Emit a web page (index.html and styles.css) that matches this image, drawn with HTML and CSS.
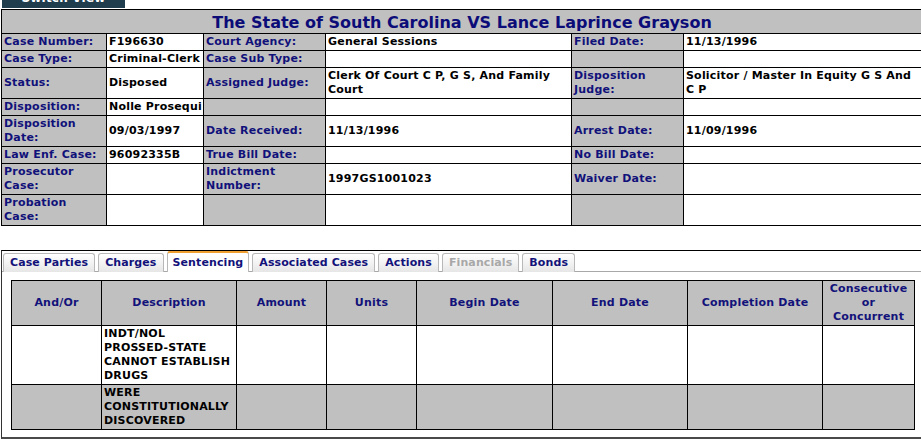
FILE: index.html
```html
<!DOCTYPE html>
<html>
<head>
<meta charset="utf-8">
<link rel="stylesheet" href="styles.css">
</head>
<body>
<div class="top"><span class="switch-btn">Switch View</span></div>
<table class="case">
  <colgroup>
    <col class="c1"><col class="c2"><col class="c3"><col class="c4"><col class="c5"><col class="c6">
  </colgroup>
  <tr><th colspan="6" class="title">The State of South Carolina VS Lance Laprince Grayson</th></tr>
  <tr class="r1">
    <td class="lbl">Case Number:</td><td class="val">F196630</td>
    <td class="lbl">Court Agency:</td><td class="val">General Sessions</td>
    <td class="lbl">Filed Date:</td><td class="val">11/13/1996</td>
  </tr>
  <tr class="r1">
    <td class="lbl">Case Type:</td><td class="val clip">Criminal-Clerk</td>
    <td class="lbl">Case Sub Type:</td><td class="val"></td>
    <td class="lbl"></td><td class="val"></td>
  </tr>
  <tr class="r2">
    <td class="lbl">Status:</td><td class="val">Disposed</td>
    <td class="lbl">Assigned Judge:</td><td class="val">Clerk Of Court C P, G S, And Family Court</td>
    <td class="lbl">Disposition Judge:</td><td class="val">Solicitor / Master In Equity G S And C P</td>
  </tr>
  <tr class="r1">
    <td class="lbl">Disposition:</td><td class="val clip">Nolle Prosequi</td>
    <td class="lbl"></td><td class="val"></td>
    <td class="lbl"></td><td class="val"></td>
  </tr>
  <tr class="r2">
    <td class="lbl">Disposition Date:</td><td class="val">09/03/1997</td>
    <td class="lbl">Date Received:</td><td class="val">11/13/1996</td>
    <td class="lbl">Arrest Date:</td><td class="val">11/09/1996</td>
  </tr>
  <tr class="r1">
    <td class="lbl">Law Enf. Case:</td><td class="val">96092335B</td>
    <td class="lbl">True Bill Date:</td><td class="val"></td>
    <td class="lbl">No Bill Date:</td><td class="val"></td>
  </tr>
  <tr class="r2">
    <td class="lbl">Prosecutor Case:</td><td class="val"></td>
    <td class="lbl">Indictment Number:</td><td class="val">1997GS1001023</td>
    <td class="lbl">Waiver Date:</td><td class="val"></td>
  </tr>
  <tr class="r2">
    <td class="lbl top-al">Probation Case:</td><td class="val"></td>
    <td class="lbl"></td><td class="val"></td>
    <td class="lbl"></td><td class="val"></td>
  </tr>
</table>

<div class="tabbox">
  <div class="tabstrip">
    <span class="tab">Case Parties</span>
    <span class="tab">Charges</span>
    <span class="tab active">Sentencing</span>
    <span class="tab">Associated Cases</span>
    <span class="tab">Actions</span>
    <span class="tab disabled">Financials</span>
    <span class="tab">Bonds</span>
  </div>
  <div class="panel">
    <table class="sent">
      <colgroup>
        <col class="s1"><col class="s2"><col class="s3"><col class="s4"><col class="s5"><col class="s6"><col class="s7"><col class="s8">
      </colgroup>
      <tr class="hdr">
        <th>And/Or</th><th>Description</th><th>Amount</th><th>Units</th><th>Begin Date</th><th>End Date</th><th>Completion Date</th><th>Consecutive <span class="word">or</span> Concurrent</th>
      </tr>
      <tr>
        <td></td><td>INDT/NOL <span class="nw">PROSSED-STATE</span> CANNOT ESTABLISH DRUGS</td><td></td><td></td><td></td><td></td><td></td><td></td>
      </tr>
      <tr class="alt">
        <td></td><td>WERE CONSTITUTIONALLY DISCOVERED</td><td></td><td></td><td></td><td></td><td></td><td></td>
      </tr>
    </table>
  </div>
</div>
</body>
</html>
```
FILE: styles.css
```css
html, body {
  margin: 0;
  padding: 0;
  background: #fff;
}
body {
  font-family: "DejaVu Sans", Verdana, sans-serif;
  font-size: 11px;
  font-weight: bold;
  letter-spacing: 0.2px;
  color: #000;
  overflow: hidden;
  padding-left: 1px;
}
.top {
  height: 9px;
  overflow: hidden;
  padding-left: 1px;
}
.switch-btn {
  display: block;
  width: 123px;
  height: 20px;
  margin-top: -12px;
  background: #1f3d4d;
  color: #fff;
  text-align: center;
  line-height: 20px;
  font-size: 12px;
}

/* case info table */
.case {
  border-collapse: collapse;
  table-layout: fixed;
  width: 921px;
}
.c1 { width: 105px; }
.c2 { width: 97px; }
.c3 { width: 122px; }
.c4 { width: 246px; }
.c5 { width: 112px; }
.c6 { width: 239px; }
.case td, .case th {
  border: 1px solid #000;
  padding: 1px 2px;
  line-height: 14px;
  vertical-align: middle;
  text-align: left;
}
.case .title {
  background: #c0c0c0;
  color: #0c0c78;
  font-size: 16px;
  letter-spacing: 0;
  line-height: 21px;
  text-align: center;
  padding: 2px 2px 0;
}
.lbl {
  background: #c0c0c0;
  color: #11117a;
}
.val {
  background: #fff;
  color: #000;
}
.clip {
  white-space: nowrap;
  overflow: hidden;
}
.case .top-al {
  vertical-align: top;
}
.r1 td { height: 14px; }
.r2 td { height: 28px; }

/* tab box */
.tabbox {
  margin-top: 24px;
  width: 940px;
  border-top: 1px solid #000;
  border-left: 1px solid #333;
  border-bottom: 2px solid #4a4a4a;
  box-shadow: 0 1px 0 #999;
}
.tabstrip {
  display: flex;
  align-items: flex-end;
  gap: 3px;
  padding: 0 0 0 1px;
  height: 20px;
  border-bottom: 1px solid #a8a8a8;
  letter-spacing: 0.1px;
}
.tab {
  display: block;
  height: 18px;
  line-height: 18px;
  padding: 0 6px;
  border: 1px solid #b8b8b8;
  border-bottom: none;
  border-radius: 3px 3px 0 0;
  background: linear-gradient(#ffffff, #e6e6e6);
  color: #12127a;
  position: relative;
  top: 1px;
  margin-top: 1px;
}
.tab.active {
  background: #fff;
  border-top: 2px solid #f0a030;
  border-color: #f0a030 #b8b8b8 #fff #b8b8b8;
  height: 19px;
  line-height: 19px;
  padding: 0 5px;
}
.tab.disabled {
  color: #a8a8a8;
}
.panel {
  padding: 8px 0 7px 9px;
  background: #fff;
}

/* sentencing table */
.sent {
  border-collapse: collapse;
  table-layout: fixed;
  width: 903px;
}
.s1 { width: 90px; }
.s2 { width: 135px; }
.s3 { width: 90px; }
.s4 { width: 90px; }
.s5 { width: 136px; }
.s6 { width: 135px; }
.s7 { width: 135px; }
.s8 { width: 92px; }
.sent th, .sent td {
  border: 1px solid #000;
  padding: 1px 2px;
  line-height: 14px;
}
.sent th {
  background: #c0c0c0;
  color: #12127a;
  text-align: center;
  vertical-align: middle;
  height: 42px;
}
.word {
  display: block;
}
.nw {
  white-space: nowrap;
}
.sent td {
  vertical-align: top;
  text-align: left;
  background: #fff;
}
.sent tr.alt td {
  background: #c0c0c0;
}
```
